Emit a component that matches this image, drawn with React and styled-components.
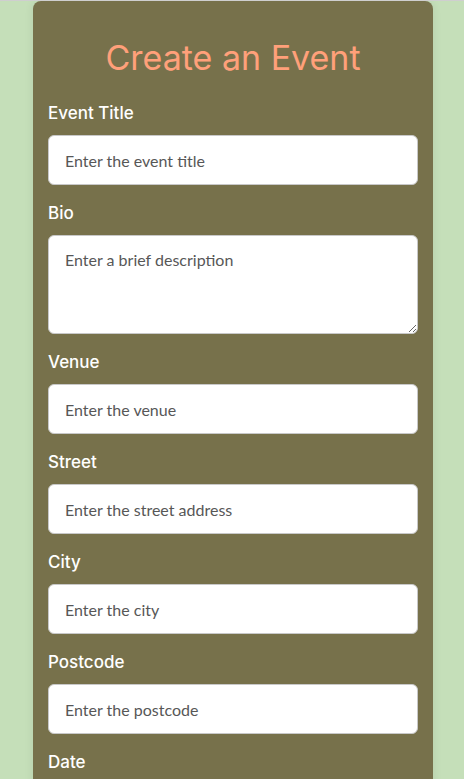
import React from "react";
import styled, { createGlobalStyle } from "styled-components";

const GlobalStyle = createGlobalStyle`
  * {
    box-sizing: border-box;
  }

  body {
    margin: 0;
    background: #c5dfb9;
    border-top: 1px solid #cfcfcf;
    font-family: "Inter", "Noto Sans", sans-serif;
  }
`;

const Page = styled.div`
  display: flex;
  justify-content: center;
  padding-left: 2px;
`;

const Card = styled.form`
  width: 400px;
  background: #77714b; // olive card
  border-radius: 8px;
  padding: 20px 15px 40px;
  box-shadow: 0 0 10px rgba(0, 0, 0, 0.08);
`;

const Title = styled.h1`
  margin: 13px 0 18.5px;
  text-align: center;
  font-size: 34px;
  line-height: 48px;
  font-weight: 400;
  color: #ffa07a;
`;

const Field = styled.div`
  display: flex;
  flex-direction: column;
  margin-bottom: 15.5px;
`;

const Label = styled.label`
  color: #fff;
  font-size: 17px;
  font-weight: 500;
  line-height: 25.5px;
  margin-bottom: 9px;
`;

const Input = styled.input`
  height: 50px;
  width: 100%;
  padding: 0 16px;
  border: 1px solid #c8c8c8;
  border-radius: 6px;
  background: #fff;
  font-family: "Lato", sans-serif;
  font-size: 16px;
  color: #333;
  outline: none;

  &::placeholder {
    color: #575757;
  }
`;

const TextArea = styled.textarea`
  height: 99px;
  width: 100%;
  padding: 14px 16px;
  border: 1px solid #c8c8c8;
  border-radius: 6px;
  background: #fff;
  font-family: "Lato", sans-serif;
  font-size: 16px;
  line-height: 20px;
  color: #333;
  outline: none;
  resize: vertical;

  &::placeholder {
    color: #575757;
  }
`;

const Button = styled.button`
  width: 100%;
  height: 48px;
  border: none;
  border-radius: 6px;
  background: #ffa07a;
  color: #fff;
  font-size: 17px;
  font-family: "Inter", sans-serif;
`;

const fields = [
  { label: "Event Title", placeholder: "Enter the event title" },
  { label: "Bio", placeholder: "Enter a brief description", area: true },
  { label: "Venue", placeholder: "Enter the venue" },
  { label: "Street", placeholder: "Enter the street address" },
  { label: "City", placeholder: "Enter the city" },
  { label: "Postcode", placeholder: "Enter the postcode" },
  { label: "Date", type: "date" },
  { label: "Time", type: "time" },
];

const App = () => {
  return (
    <>
      <GlobalStyle />
      <Page>
        <Card onSubmit={(e) => e.preventDefault()}>
          <Title>Create an Event</Title>
          {fields.map((f) => (
            <Field key={f.label}>
              <Label>{f.label}</Label>
              {f.area ? (
                <TextArea placeholder={f.placeholder} />
              ) : (
                <Input type={f.type || "text"} placeholder={f.placeholder} />
              )}
            </Field>
          ))}
          <Button type="submit">Create Event</Button>
        </Card>
      </Page>
    </>
  );
};

export default App;
